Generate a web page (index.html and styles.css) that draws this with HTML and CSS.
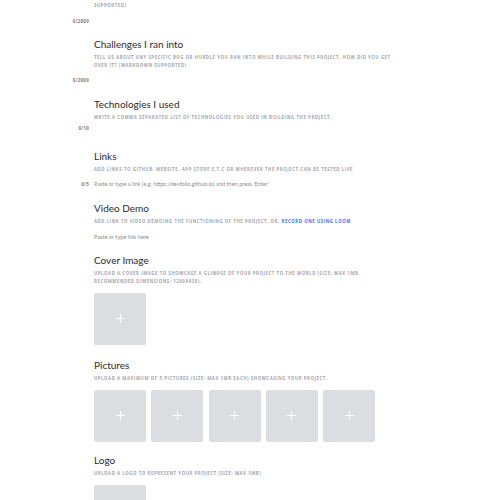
FILE: index.html
```html
<!DOCTYPE html>
<html>
<head>
<meta charset="utf-8">
<link rel="stylesheet" href="styles.css">
</head>
<body>
<div class="form">
  <div class="row top">
    <div></div>
    <p class="sub">SUPPORTED)</p>
  </div>
  <div class="row count-row c1">
    <span class="count">0/2000</span>
  </div>

  <section class="row sec s-challenges">
    <div></div>
    <div>
      <h2 class="title">Challenges I ran into</h2>
      <p class="sub">Tell us about any specific bug or hurdle you ran into while building this project. How did you get over it? (Markdown supported)</p>
    </div>
  </section>
  <div class="row count-row c2">
    <span class="count">0/2000</span>
  </div>

  <section class="row sec s-tech">
    <div></div>
    <div>
      <h2 class="title">Technologies I used</h2>
      <p class="sub">Write a comma separated list of technologies you used in building the project.</p>
    </div>
  </section>
  <div class="row count-row c3">
    <span class="count">0/10</span>
  </div>

  <section class="row sec s-links">
    <div></div>
    <div>
      <h2 class="title">Links</h2>
      <p class="sub">Add links to Github, website, app store e.t.c or wherever the project can be tested live</p>
    </div>
  </section>
  <div class="row input-row r-links">
    <span class="count">0/5</span>
    <span class="placeholder">Paste or type a link (e.g. https://devfolio.github.io) and then press 'Enter'</span>
  </div>

  <section class="row sec s-video">
    <div></div>
    <div>
      <h2 class="title">Video Demo</h2>
      <p class="sub">Add link to video demoing the functioning of the project. Or, <a class="link" href="#">Record one using Loom</a></p>
    </div>
  </section>
  <div class="row input-row r-video">
    <span></span>
    <span class="placeholder">Paste or type link here</span>
  </div>

  <section class="row sec s-cover">
    <div></div>
    <div>
      <h2 class="title">Cover Image</h2>
      <p class="sub">Upload a cover image to showcase a glimpse of your project to the world (Size: Max 1MB, recommended dimensions: 1200x630).</p>
      <div class="uploads">
        <div class="box"><span class="plus"></span></div>
      </div>
    </div>
  </section>

  <section class="row sec s-pictures">
    <div></div>
    <div>
      <h2 class="title">Pictures</h2>
      <p class="sub">Upload a maximum of 5 pictures (Size: Max 1MB each) showcasing your project.</p>
      <div class="uploads">
        <div class="box"><span class="plus"></span></div>
        <div class="box"><span class="plus"></span></div>
        <div class="box"><span class="plus"></span></div>
        <div class="box"><span class="plus"></span></div>
        <div class="box"><span class="plus"></span></div>
      </div>
    </div>
  </section>

  <section class="row sec s-logo">
    <div></div>
    <div>
      <h2 class="title">Logo</h2>
      <p class="sub">Upload a logo to represent your project (Size: Max 1MB)</p>
      <div class="uploads">
        <div class="box"><span class="plus"></span></div>
      </div>
    </div>
  </section>
</div>
</body>
</html>
```
FILE: styles.css
```css
html, body {
  margin: 0;
  padding: 0;
  background: #ffffff;
}

body {
  font-family: Lato, "Open Sans", sans-serif;
  color: #2a2b2e;
  height: 500px;
  overflow: hidden;
}

.form {
  display: flex;
  flex-direction: column;
  margin-top: 1px;
}

.row {
  display: grid;
  grid-template-columns: 89px 302px;
  column-gap: 5px;
  align-items: center;
}

.sec {
  align-items: start;
}

.title {
  margin: 0;
  font-size: 10px;
  line-height: 12px;
  font-weight: 400;
  color: #2a2b2e;
}

.sub {
  margin: 3px 0 0;
  font-family: "Open Sans", Lato, sans-serif;
  font-size: 4.3px;
  line-height: 8px;
  font-weight: 700;
  letter-spacing: 0.58px;
  text-transform: uppercase;
  color: #a3a5ab;
}

.top .sub {
  margin: 0;
}

.link {
  color: #3770ff;
  text-decoration: none;
}

.count {
  text-align: right;
  font-family: "Open Sans", Lato, sans-serif;
  font-size: 4.4px;
  line-height: 8px;
  font-weight: 700;
  letter-spacing: 0.3px;
  color: #7a7b80;
}

.placeholder {
  font-size: 5.6px;
  line-height: 8px;
  color: #8c8e93;
}

.c1 { margin-top: 8px; }
.s-challenges { margin-top: 13px; }
.c2 { margin-top: 6.5px; }
.s-tech { margin-top: 14px; }
.c3 { margin-top: 3.5px; }
.s-links { margin-top: 17.5px; }
.r-links { margin-top: 7px; }
.s-video { margin-top: 14px; }
.r-video { margin-top: 8px; }
.s-cover { margin-top: 13px; }
.s-pictures { margin-top: 14px; }
.s-logo { margin-top: 12px; }

.uploads {
  display: flex;
  gap: 5.3px;
  margin-top: 8px;
}

.box {
  width: 52px;
  height: 52px;
  border-radius: 2px;
  background: #dcdde0;
  display: flex;
  align-items: center;
  justify-content: center;
}

.plus {
  position: relative;
  width: 9px;
  height: 9px;
}

.plus::before,
.plus::after {
  content: "";
  position: absolute;
  background: #ffffff;
}

.plus::before {
  left: 0;
  top: 4px;
  width: 9px;
  height: 1px;
}

.plus::after {
  left: 4px;
  top: 0;
  width: 1px;
  height: 9px;
}
```
